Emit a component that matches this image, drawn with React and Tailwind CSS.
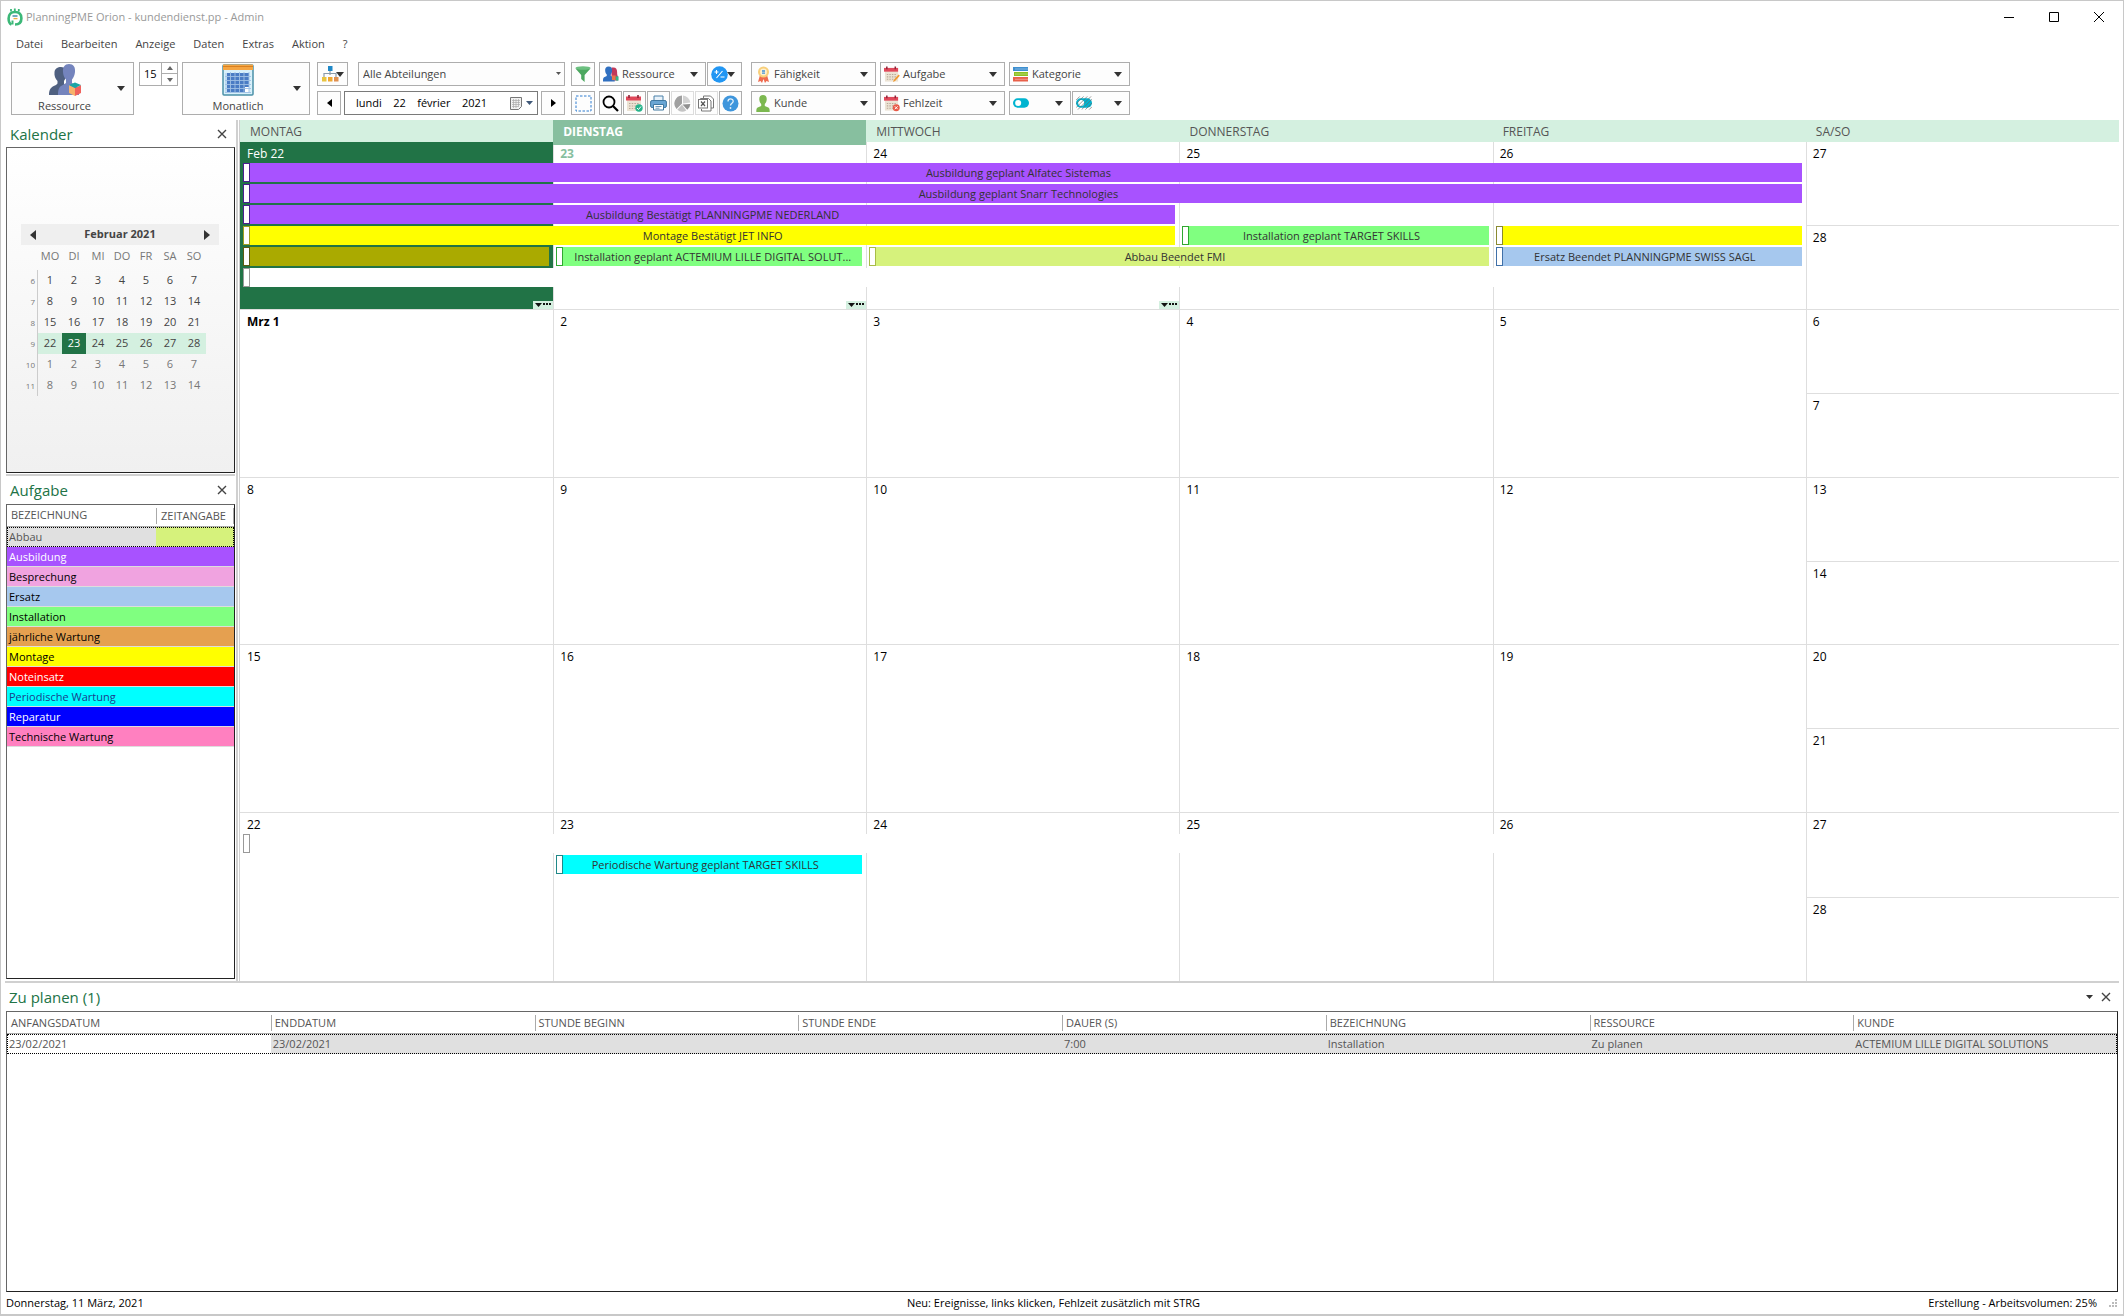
import React, { useState } from "react";

const menuItems = ["Datei", "Bearbeiten", "Anzeige", "Daten", "Extras", "Aktion", "?"];

const weekdays = ["MONTAG", "DIENSTAG", "MITTWOCH", "DONNERSTAG", "FREITAG", "SA/SO"];

const weeks = [
  {
    days: ["Feb 22", "23", "24", "25", "26"],
    weekend: ["27", "28"],
    selected: 0,
    today: 1,
    more: [0, 1, 2],
    events: [
      { label: "Ausbildung geplant Alfatec Sistemas", place: "row-start-1 col-start-1 col-span-5", color: "bg-[#a852ff]", edge: "border-[#4a2090]" },
      { label: "Ausbildung geplant Snarr Technologies", place: "row-start-2 col-start-1 col-span-5", color: "bg-[#a852ff]", edge: "border-[#4a2090]" },
      { label: "Ausbildung Bestätigt PLANNINGPME NEDERLAND", place: "row-start-3 col-start-1 col-span-3", color: "bg-[#a852ff]", edge: "border-[#4a2090]", confirmed: true },
      { label: "Montage Bestätigt JET INFO", place: "row-start-4 col-start-1 col-span-3", color: "bg-[#ffff00]", edge: "border-[#a0a020]", confirmed: true },
      { label: "Installation geplant TARGET SKILLS", place: "row-start-4 col-start-4", color: "bg-[#80ff80]", edge: "border-[#30a830]" },
      { label: "", place: "row-start-4 col-start-5", color: "bg-[#ffff00]", edge: "border-[#8a8a30]" },
      { label: "", place: "row-start-5 col-start-1", color: "bg-[#aaaa00]", edge: "border-[#5c5c10]" },
      { label: "Installation geplant ACTEMIUM LILLE DIGITAL SOLUT...", place: "row-start-5 col-start-2", color: "bg-[#80ff80]", edge: "border-[#30a830]", confirmed: true },
      { label: "Abbau Beendet FMI", place: "row-start-5 col-start-3 col-span-2", color: "bg-[#d6f27c]", edge: "border-[#a8bc48]" },
      { label: "Ersatz Beendet PLANNINGPME SWISS SAGL", place: "row-start-5 col-start-5", color: "bg-[#a6c8ee]", edge: "border-[#4070a8]" },
      { label: "", place: "row-start-6 col-start-1 col-span-5", color: "bg-white", edge: "border-[#999999]", wide: true },
    ],
  },
  { days: ["Mrz 1", "2", "3", "4", "5"], weekend: ["6", "7"], events: [] },
  { days: ["8", "9", "10", "11", "12"], weekend: ["13", "14"], events: [] },
  { days: ["15", "16", "17", "18", "19"], weekend: ["20", "21"], events: [] },
  {
    days: ["22", "23", "24", "25", "26"],
    weekend: ["27", "28"],
    events: [
      { label: "", place: "row-start-1 col-start-1 col-span-5", color: "bg-white", edge: "border-[#999999]", wide: true },
      { label: "Periodische Wartung geplant TARGET SKILLS", place: "row-start-2 col-start-2", color: "bg-[#00ffff]", edge: "border-[#208888]" },
    ],
  },
];

const miniWeeks = [
  { no: 6, days: [1, 2, 3, 4, 5, 6, 7] },
  { no: 7, days: [8, 9, 10, 11, 12, 13, 14] },
  { no: 8, days: [15, 16, 17, 18, 19, 20, 21] },
  { no: 9, days: [22, 23, 24, 25, 26, 27, 28], current: true },
  { no: 10, days: [1, 2, 3, 4, 5, 6, 7], other: true },
  { no: 11, days: [8, 9, 10, 11, 12, 13, 14], other: true },
];

const tasks = [
  { name: "Ausbildung", style: "bg-[#a852ff] text-white" },
  { name: "Besprechung", style: "bg-[#f0a3e0] text-black" },
  { name: "Ersatz", style: "bg-[#a6c8ee] text-black" },
  { name: "Installation", style: "bg-[#80ff80] text-black" },
  { name: "jährliche Wartung", style: "bg-[#e5a050] text-black" },
  { name: "Montage", style: "bg-[#ffff00] text-black" },
  { name: "Noteinsatz", style: "bg-[#ff0000] text-white" },
  { name: "Periodische Wartung", style: "bg-[#00ffff] text-[#1c3c8c]" },
  { name: "Reparatur", style: "bg-[#0000ff] text-white" },
  { name: "Technische Wartung", style: "bg-[#ff80c0] text-black" },
];

const planColumns = ["ANFANGSDATUM", "ENDDATUM", "STUNDE BEGINN", "STUNDE ENDE", "DAUER (S)", "BEZEICHNUNG", "RESSOURCE", "KUNDE"];
const planRow = ["23/02/2021", "23/02/2021", "", "", "7:00", "Installation", "Zu planen", "ACTEMIUM LILLE DIGITAL SOLUTIONS"];

function Caret({ className = "" }) {
  return (
    <svg width="8" height="5" viewBox="0 0 8 5" className={`shrink-0 ${className}`}>
      <path d="M0 0h8L4 5z" fill="#333" />
    </svg>
  );
}

function CloseIcon() {
  return (
    <svg width="10" height="10" viewBox="0 0 10 10">
      <path d="M1 1l8 8M9 1L1 9" stroke="#444" strokeWidth="1.4" />
    </svg>
  );
}

function Logo() {
  return (
    <svg width="16" height="18" viewBox="0 0 16 18">
      <path d="M4 3.5V1M7.8 3V.5M11.8 3.5V1" stroke="#3cb878" strokeWidth="1.8" />
      <path d="M4.5 16.500C2.200 15.500 1.600 13 1.600 10.500 1.600 6 4 4 8 4s6.400 2 6.400 6.200-2.400 6.300-6.400 6.300" fill="none" stroke="#3cb878" strokeWidth="2.600" />
      <path d="M5.500 8h5" stroke="#2b7a9b" strokeWidth="1.3" />
      <path d="M6.500 10.6h4" stroke="#f0b040" strokeWidth="1.3" />
      <path d="M5.500 12.500v4" stroke="#3cb878" strokeWidth="2" />
    </svg>
  );
}

function PeopleIcon() {
  return (
    <svg width="32" height="32" viewBox="0 0 32 32">
      <path d="M12 3c4 0 6 3 5.500 7.500-.3 3-1.500 5-2.500 6.500v3l6 4v7H0c0-6 2-8 7-10l1.500-1.500V17C6.500 15 5 12 5.500 8 6 4.500 8.500 3 12 3z" fill="#4f6080" />
      <path d="M20 0c4.500 0 6.500 3 6 8-.3 3-1.500 5.500-3 7.500V19l4 2.500c2.500 1.500 3 4.500 3 9.500H9c0-5.500 1-8 4-9.500l4-2.500v-3.500c-1.800-2-2.800-4.500-3-7.500-.4-5 1.800-8 6-8z" fill="#7484bd" />
      <path d="M20 21l6 3v8l-6-3z" fill="#f6b26b" />
      <path d="M32 21l-6 3v8l6-3z" fill="#f0625d" />
      <path d="M20 21l6-2.500 6 2.500-6 3z" fill="#18a5a5" />
    </svg>
  );
}

function MonthIcon() {
  return (
    <svg width="32" height="32" viewBox="0 0 32 32">
      <rect x="1" y="1" width="30" height="30" rx="1" fill="#d8f0fa" stroke="#4a90a8" strokeWidth="1.500" />
      <path d="M1 .5h30V6H1z" fill="#f5a542" />
      <path d="M1 2.500h30" stroke="#d98020" />
      <path d="M5 9h22v14h-4v5H5z" fill="#4a7cc4" />
      <path d="M23 23h4v5h-4z" fill="#fff" />
      <path d="M4 9v20M8.500 8v21M13 8v21M17.500 8v21M22 8v21M27 8v21M3 12.500h26M3 16.500h26M3 20.500h26M3 24.500h26M3 28.500h26" stroke="#9fc0e4" strokeWidth=".9" />
    </svg>
  );
}

function TreeIcon() {
  return (
    <svg width="18" height="16" viewBox="0 0 18 16">
      <path d="M8 4v5M2 11V7.500h12V11" fill="none" stroke="#8a9aa8" strokeWidth="1.200" />
      <rect x="6" y="0" width="4.500" height="5" fill="#1e88c8" />
      <rect x="0" y="11" width="4.500" height="4.500" fill="#e8c440" />
      <rect x="6" y="11" width="4.500" height="4.500" fill="#f0a830" />
      <rect x="12" y="11" width="4.500" height="4.500" fill="#e09050" />
    </svg>
  );
}

function FunnelIcon() {
  return (
    <svg width="16" height="16" viewBox="0 0 16 16">
      <path d="M.5 2.500l5.700 6.500v4l3.400 3V9l5.900-6.500z" fill="#4ca860" />
      <ellipse cx="8" cy="2" rx="7.500" ry="1.800" fill="#6cc080" />
    </svg>
  );
}

function ResourceIcon() {
  return (
    <svg width="17" height="16" viewBox="0 0 17 16">
      <path d="M11 1c3 0 4 2 4 5 0 2 0 3 1 5v4H9V1z" fill="#c0395a" />
      <path d="M6 0c2.800 0 4 1.800 3.700 4.600C9.500 6.500 9 7.500 8.300 8.500V10l3 1.500c.9.500 1.200 1.500 1.200 4.500H0c0-3 .3-4 1.200-4.500L4 10V8.500C3 7.500 2.500 6.500 2.300 4.600 2 1.800 3.200 0 6 0z" fill="#2f6fc0" />
      <path d="M9.500 9.500h4v5h-4z" fill="#e8734a" />
      <path d="M13.500 10.500h3V15h-3z" fill="#2fb88a" />
    </svg>
  );
}

function PlusMinusIcon() {
  return (
    <svg width="17" height="17" viewBox="0 0 17 17">
      <circle cx="8.500" cy="8.500" r="8.300" fill="#2196f3" />
      <path d="M3.500 6h4M5.500 4v4M11.500 5l-6 7M9.500 11h4" stroke="#fff" strokeWidth="1.100" />
    </svg>
  );
}

function MedalIcon() {
  return (
    <svg width="13" height="17" viewBox="0 0 13 17">
      <path d="M3 9l-2 7 2.500-1L5 17l1.500-4L8 17l1.500-2 2.500 1-2-7z" fill="#ef6b4f" />
      <circle cx="6.500" cy="6" r="5.500" fill="#f8cf7a" />
      <circle cx="6.500" cy="6" r="3.400" fill="#fdf0d0" />
      <path d="M5 5h3M5 7.200h3" stroke="#4090d8" strokeWidth="1.300" />
    </svg>
  );
}

function CalendarIcon({ kind }) {
  return (
    <svg width="17" height="17" viewBox="0 0 17 17">
      <path d="M1 5h14v11H1z" fill="#ece3d4" />
      <path d="M0 1.500h15V5.500H0z" fill="#e0485a" />
      <path d="M3 0v3M12 0v3" stroke="#8c2438" strokeWidth="1.600" />
      <path d="M3 8.500h10M3 11h10M3 13.500h7" stroke="#b8a898" strokeWidth="1.200" strokeDasharray="1.500 1.200" />
      {kind === "edit" && <path d="M15.500 8.500L10.500 14l-1 2.500 2.300-1.200 5-5.500z" fill="#f09a30" />}
      {kind === "remove" && <circle cx="13" cy="13" r="3.700" fill="#e85a48" />}
      {kind === "remove" && <path d="M11.500 11.500l3 3M14.500 11.500l-3 3" stroke="#fff" />}
      {kind === "check" && <circle cx="13" cy="13" r="3.700" fill="#26b48c" />}
      {kind === "check" && <path d="M11 13l1.500 1.500 2.500-3" fill="none" stroke="#fff" />}
    </svg>
  );
}

function BooksIcon() {
  return (
    <svg width="16" height="16" viewBox="0 0 16 16">
      <path d="M0 1h15v4H0z" fill="#3d8fd0" />
      <path d="M1 6h14v4H1z" fill="#8cc021" />
      <path d="M0 11h15v4.500H0z" fill="#e8604a" />
      <path d="M2 3h13M2 8h13M2 13.300h13" stroke="#fff" strokeWidth=".6" opacity=".6" />
    </svg>
  );
}

function ClientIcon() {
  return (
    <svg width="14" height="17" viewBox="0 0 14 17">
      <path d="M7 0c2.600 0 4 1.800 3.700 4.700C10.500 7 9.500 8.200 8.800 9v2l3.500 1.500c1 .5 1.400 1.500 1.400 4.500H.3c0-3 .4-4 1.400-4.500L5.200 11V9C4.500 8.200 3.500 7 3.300 4.700 3 1.800 4.400 0 7 0z" fill="#7cb850" />
    </svg>
  );
}

function ToggleIcon({ hatched }) {
  return (
    <svg width="17" height="14" viewBox="0 0 17 14">
      <rect x="0" y="2" width="17" height="10" rx="5" fill="#00b4d0" />
      <circle cx="5.500" cy="7" r="3.200" fill="#fff" />
      {hatched && <path d="M0 4l4-4M0 8l8-8M0 12L12 0M2 14L16 0M6 14L17 3M10 14l7-7M14 14l3-3" stroke="#666" strokeWidth=".7" />}
    </svg>
  );
}

function SelectionIcon() {
  return (
    <svg width="17" height="17" viewBox="0 0 17 17">
      <rect x="1" y="1" width="15" height="15" fill="none" stroke="#2f7dd0" strokeDasharray="2.500 1.500" />
    </svg>
  );
}

function SearchIcon() {
  return (
    <svg width="17" height="17" viewBox="0 0 17 17">
      <circle cx="7" cy="7" r="5.500" fill="none" stroke="#000" strokeWidth="1.800" />
      <path d="M11 11l5 5" stroke="#000" strokeWidth="2.200" />
    </svg>
  );
}

function PrinterIcon() {
  return (
    <svg width="17" height="16" viewBox="0 0 17 16">
      <path d="M4 1h9v5H4z" fill="#e8f2fa" stroke="#4a80a8" />
      <rect x=".6" y="5.500" width="15.800" height="7" rx="1.500" fill="#6aa6d4" stroke="#3f78a0" />
      <path d="M3.500 9.500h10V15h-10z" fill="#fff" stroke="#3f78a0" />
      <path d="M5.500 11.500h6M5.500 13.200h4" stroke="#4a80a8" strokeWidth=".8" />
    </svg>
  );
}

function PieIcon() {
  return (
    <svg width="17" height="17" viewBox="0 0 17 17">
      <path d="M8 8.500V.6A8 8 0 0 0 2.500 14z" fill="#a0a0a0" />
      <path d="M9 7.500V.6a8 8 0 0 1 7.300 7L9 8.500z" fill="#d2d2d2" />
      <path d="M8.500 9.500l7.800-.5a8 8 0 0 1-3 5.800z" fill="#909090" />
      <path d="M8 9.800l4.300 5.600A8 8 0 0 1 3.300 14.800z" fill="#c4c4c4" />
    </svg>
  );
}

function ExcelIcon() {
  return (
    <svg width="17" height="17" viewBox="0 0 17 17">
      <path d="M5.500 3V1h7l3 3v9h-3" fill="#fff" stroke="#777" />
      <path d="M2.500 4V3.500h8L13 6v10H3.500v-2" fill="#fff" stroke="#777" />
      <rect x=".5" y="4.500" width="9" height="8.500" fill="#fff" stroke="#777" />
      <path d="M3 6.500l4 4.500M7 6.500L3 11" stroke="#555" strokeWidth="1.200" />
    </svg>
  );
}

function HelpIcon() {
  return (
    <svg width="17" height="17" viewBox="0 0 17 17">
      <circle cx="8.500" cy="8.500" r="8" fill="#3f96dc" />
      <path d="M6 6.500c0-3.500 5.200-3.300 5.200-.3 0 2-2.700 2-2.700 4.300" fill="none" stroke="#e4f2fc" strokeWidth="1.300" />
      <circle cx="8.500" cy="13" r=".9" fill="#e4f2fc" />
    </svg>
  );
}

function ComboButton({ icon, label, width }) {
  return (
    <button className={`flex h-6 items-center border border-[#adadad] bg-[#fdfdfd] px-[3px] text-left ${width}`} aria-label={label || "Umschalten"}>
      <span className="mr-[3px] flex w-4 shrink-0 justify-center">{icon}</span>
      <span className="grow">{label}</span>
      <Caret className="mr-1" />
    </button>
  );
}

function IconButton({ icon, label, width = "w-[23px]", faded }) {
  return (
    <button
      aria-label={label}
      className={`flex h-6 items-center justify-center border bg-[#fdfdfd] ${width} ${faded ? "border-[#dcdcdc]" : "border-[#adadad]"}`}
    >
      {icon}
    </button>
  );
}

function BigButton({ icon, label, width }) {
  return (
    <button className={`flex h-[53px] border border-[#adadad] bg-[#fdfdfd] ${width}`}>
      <span className="flex h-full grow flex-col items-center justify-between">
        <span className="pt-px">{icon}</span>
        <span className="leading-4">{label}</span>
      </span>
      <Caret className="mr-2 self-center" />
    </button>
  );
}

function Toolbar() {
  const [step, setStep] = useState(15);
  const [date, setDate] = useState("lundi    22    février    2021");

  return (
    <div className="flex pt-[7px] pb-[5px] pl-[10px]">
      <BigButton icon={<PeopleIcon />} label="Ressource" width="w-[123px]" />
      <div className="ml-[5px] flex h-6 w-[39px] border border-[#adadad]">
        <input
          aria-label="Schrittweite"
          className="w-[21px] bg-white pl-1 text-black outline-none"
          value={step}
          onChange={(e) => setStep(Number(e.target.value) || 0)}
        />
        <div className="flex grow flex-col border-l border-[#adadad]">
          <button aria-label="Mehr" className="flex h-[11px] items-center justify-center border-b border-[#adadad]" onClick={() => setStep(step + 1)}>
            <svg width="6" height="4" viewBox="0 0 6 4"><path d="M0 4h6L3 0z" fill="#666" /></svg>
          </button>
          <button aria-label="Weniger" className="flex h-[11px] items-center justify-center" onClick={() => setStep(step - 1)}>
            <svg width="6" height="4" viewBox="0 0 6 4"><path d="M0 0h6L3 4z" fill="#666" /></svg>
          </button>
        </div>
      </div>
      <div className="ml-1">
        <BigButton icon={<MonthIcon />} label="Monatlich" width="w-32" />
      </div>

      <div className="ml-[7px] flex w-[248px] flex-col gap-[5px]">
        <div className="flex gap-[10px]">
          <button aria-label="Struktur" className="flex h-6 w-[31px] items-center justify-center border border-[#adadad] bg-[#fdfdfd]">
            <TreeIcon />
            <Caret className="-ml-1" />
          </button>
          <div className="relative grow">
            <select aria-label="Abteilung" className="h-6 w-full appearance-none border border-[#adadad] bg-[#fdfdfd] px-1">
              <option>Alle Abteilungen</option>
            </select>
            <svg width="5" height="3" viewBox="0 0 5 3" className="pointer-events-none absolute top-[10px] right-[4px]">
              <path d="M0 0h5L2.500 3z" fill="#555" />
            </svg>
          </div>
        </div>
        <div className="flex gap-[3px]">
          <IconButton
            label="Zurück"
            width="w-6"
            icon={<svg width="5" height="8" viewBox="0 0 5 8"><path d="M5 0v8L0 4z" fill="#000" /></svg>}
          />
          <div className="flex h-6 grow items-center border border-[#7a7a7a] bg-white pr-1">
            <input
              aria-label="Datum"
              className="w-0 grow bg-transparent pl-[11px] text-black outline-none"
              value={date}
              onChange={(e) => setDate(e.target.value)}
            />
            <button aria-label="Kalender öffnen" className="flex items-center gap-1">
              <svg width="12" height="13" viewBox="0 0 12 13">
                <path d="M.5.5h11v9l-3 3h-8z" fill="#f2f2f2" stroke="#777" />
                <path d="M2 3.500h8M2 5.500h8M2 7.500h8M2 9.500h6M3.500 2v9M6 2v9M8.500 2v8" stroke="#aaa" strokeWidth=".7" />
              </svg>
              <svg width="7" height="4" viewBox="0 0 7 4"><path d="M0 0h7L3.500 4z" fill="#3f5878" /></svg>
            </button>
          </div>
          <IconButton
            label="Weiter"
            width="w-6"
            icon={<svg width="5" height="8" viewBox="0 0 5 8"><path d="M0 0v8l5-4z" fill="#000" /></svg>}
          />
        </div>
      </div>

      <div className="ml-[6px] flex flex-col gap-[5px]">
        <div className="flex gap-1">
          <IconButton label="Filter" width="w-6" icon={<FunnelIcon />} />
          <div className="flex gap-px">
            <ComboButton icon={<ResourceIcon />} label="Ressource" width="w-[107px]" />
            <button aria-label="Plus Minus" className="flex h-6 w-[35px] items-center border border-[#adadad] bg-[#fdfdfd] pl-[3px]">
              <PlusMinusIcon />
              <Caret className="-ml-px" />
            </button>
          </div>
        </div>
        <div className="flex gap-1">
          <IconButton label="Auswahl" width="w-6" icon={<SelectionIcon />} />
          <div className="flex gap-px">
            <IconButton label="Suchen" icon={<SearchIcon />} />
            <IconButton label="Termin prüfen" icon={<CalendarIcon kind="check" />} />
            <IconButton label="Drucken" icon={<PrinterIcon />} />
            <IconButton label="Statistik" icon={<PieIcon />} faded />
            <IconButton label="Export" icon={<ExcelIcon />} faded />
            <IconButton label="Hilfe" icon={<HelpIcon />} />
          </div>
        </div>
      </div>

      <div className="ml-[9px] flex flex-col gap-[5px]">
        <div className="flex gap-1">
          <ComboButton icon={<MedalIcon />} label="Fähigkeit" width="w-[125px]" />
          <ComboButton icon={<CalendarIcon kind="edit" />} label="Aufgabe" width="w-[125px]" />
          <ComboButton icon={<BooksIcon />} label="Kategorie" width="w-[121px]" />
        </div>
        <div className="flex gap-1">
          <ComboButton icon={<ClientIcon />} label="Kunde" width="w-[125px]" />
          <ComboButton icon={<CalendarIcon kind="remove" />} label="Fehlzeit" width="w-[125px]" />
          <div className="flex gap-px">
            <ComboButton icon={<ToggleIcon />} label="" width="w-[62px]" />
            <ComboButton icon={<ToggleIcon hatched />} label="" width="w-[58px]" />
          </div>
        </div>
      </div>
    </div>
  );
}

function PanelTitle({ title, height, children }) {
  return (
    <div className={`flex items-center justify-between pr-2 pl-1 ${height}`}>
      <h2 className="text-[15px] leading-5 text-[#217346]">{title}</h2>
      <div className="flex items-center gap-2">
        {children}
        <button aria-label={`${title} schließen`}>
          <CloseIcon />
        </button>
      </div>
    </div>
  );
}

function MiniCalendar() {
  return (
    <div className="flex h-[326px] items-center border border-[#222] border-t-[#666] border-l-[#666] bg-linear-to-b from-white to-[#f0f0f0]">
      <div className="ml-[14px] w-[198px]">
        <div className="flex h-[21px] items-center justify-between bg-[#efefef] px-[9px]">
          <button aria-label="Voriger Monat">
            <svg width="6" height="10" viewBox="0 0 6 10"><path d="M6 0v10L0 5z" fill="#333" /></svg>
          </button>
          <span className="font-bold">Februar 2021</span>
          <button aria-label="Nächster Monat">
            <svg width="6" height="10" viewBox="0 0 6 10"><path d="M0 0v10l6-5z" fill="#333" /></svg>
          </button>
        </div>
        <table className="w-[185px] table-fixed border-separate border-spacing-0 text-center">
          <thead>
            <tr className="h-[25px] text-[#777]">
              <th className="w-[17px] p-0" aria-label="Woche"></th>
              {["MO", "DI", "MI", "DO", "FR", "SA", "SO"].map((day) => (
                <th key={day} className="p-0 pb-[2px] font-normal">{day}</th>
              ))}
            </tr>
          </thead>
          <tbody>
            {miniWeeks.map((week) => (
              <tr key={week.no} className={`h-[21px] ${week.other ? "text-[#777]" : "text-[#444]"}`}>
                <td className="border-r border-[#ccc] p-0 pr-[2px] text-right text-[8px] text-[#777]">{week.no}</td>
                {week.days.map((day) => (
                  <td
                    key={day}
                    className={`p-0 ${week.current ? (day === 23 ? "bg-[#217346] text-white" : "bg-[#d4f0e0]") : ""}`}
                  >
                    {day}
                  </td>
                ))}
              </tr>
            ))}
          </tbody>
        </table>
      </div>
    </div>
  );
}

function TaskList() {
  return (
    <div className="mb-[2px] grow border border-[#222] border-t-[#666] border-l-[#666]">
      <table className="w-full table-fixed border-separate border-spacing-0 text-left">
        <thead>
          <tr className="h-[22px] text-[#555]">
            <th className="w-[149px] border-b border-[#aaa] p-0 pl-1 font-normal">BEZEICHNUNG</th>
            <th className="border-b border-[#aaa] p-0 font-normal">
              <span className="block border-x border-[#aaa] pl-1 leading-4">ZEITANGABE</span>
            </th>
          </tr>
        </thead>
        <tbody>
          <tr className="h-5 leading-4 outline-1 -outline-offset-1 outline-dotted outline-black">
            <td className="bg-[#e0e0e0] p-0 pl-[2px] text-[#555]">Abbau</td>
            <td className="bg-[#d6f27c] p-0"></td>
          </tr>
          {tasks.map((task) => (
            <tr key={task.name} className={`h-5 leading-4 ${task.style}`}>
              <td colSpan={2} className="border-b border-[#dddddd] p-0 pl-[2px]">{task.name}</td>
            </tr>
          ))}
        </tbody>
      </table>
    </div>
  );
}

function CalendarEvent({ event }) {
  return (
    <div className={`z-10 ml-[3px] flex min-w-0 ${event.place} ${event.wide ? "" : "mr-1"} ${event.color}`}>
      <span className={`w-[7px] shrink-0 border bg-white ${event.edge}`}></span>
      <span
        className={`min-w-0 grow overflow-hidden text-center leading-[19px] whitespace-nowrap text-[#333] ${event.confirmed ? "" : "pr-[15px]"}`}
      >
        {event.label}
      </span>
    </div>
  );
}

function Week({ week, last }) {
  const line = last ? "" : "border-b border-[#dedede]";
  return (
    <div className="relative grid flex-1 grid-cols-6 text-[12px] leading-4 text-black">
      {week.days.map((day, index) => (
        <div
          key={index}
          className={`relative pt-1 ${line} ${index > 0 ? "border-l border-l-[#dedede] pl-[6px]" : "pl-[7px]"} ${
            week.selected === index ? "bg-[#217346] text-white" : ""
          } ${week.today === index ? "font-bold text-[#87bf9f]" : ""} ${day === "Mrz 1" ? "font-bold" : ""}`}
        >
          {day}
          {week.more && week.more.includes(index) && (
            <button aria-label="Mehr anzeigen" className="absolute right-0 bottom-0 flex h-2 w-5 items-center justify-center bg-[#d4f0e0]">
              <svg width="16" height="4" viewBox="0 0 16 4">
                <path d="M0 0h7L3.500 4zM8 0h2v2H8zM11 0h2v2h-2zM14 0h2v2h-2z" fill="#111" />
              </svg>
            </button>
          )}
        </div>
      ))}
      <div className={`flex flex-col border-l border-l-[#dedede] ${line}`}>
        <div className="flex-1 border-b border-[#dedede] pt-1 pl-[6px]">{week.weekend[0]}</div>
        <div className="flex-1 pt-1 pl-[6px]">{week.weekend[1]}</div>
      </div>
      {week.events.length > 0 && (
        <div className="absolute inset-x-0 top-[21px] grid auto-rows-[19px] grid-cols-6 gap-y-[2px] text-[11px]">
          {week.events.map((event) => (
            <CalendarEvent key={event.place} event={event} />
          ))}
        </div>
      )}
    </div>
  );
}

function MonthView() {
  return (
    <main className="mr-1 flex grow flex-col">
      <div className="relative z-20 grid h-[22px] grid-cols-6 bg-[#d4f0e0] text-[12px] leading-6 text-[#555]">
        {weekdays.map((day) => (
          <div key={day} className={`pl-[10px] ${day === "DIENSTAG" ? "h-[25px] bg-[#87bf9f] font-bold text-white" : ""}`}>
            {day}
          </div>
        ))}
      </div>
      {weeks.map((week, index) => (
        <Week key={index} week={week} last={index === weeks.length - 1} />
      ))}
    </main>
  );
}

function PlanningPanel() {
  return (
    <section className="mx-1 flex h-[311px] shrink-0 flex-col border-t-2 border-[#d0d0d0]">
      <PanelTitle title="Zu planen (1)" height="h-7">
        <button aria-label="Optionen">
          <svg width="7" height="4" viewBox="0 0 7 4"><path d="M0 0h7L3.500 4z" fill="#333" /></svg>
        </button>
      </PanelTitle>
      <div className="mx-px grow border border-[#222] border-t-[#666] border-l-[#666]">
        <table className="w-full table-fixed border-separate border-spacing-0 text-left text-[#555]">
          <thead>
            <tr className="h-[22px]">
              {planColumns.map((column, index) => (
                <th key={column} className="border-b border-[#aaa] p-0 font-normal">
                  <span className={`block leading-4 ${index > 0 ? "border-l border-[#aaa] pl-[3px]" : "pl-1"}`}>{column}</span>
                </th>
              ))}
            </tr>
          </thead>
          <tbody>
            <tr className="h-5 leading-4 outline-1 -outline-offset-1 outline-dotted outline-black">
              {planRow.map((value, index) => (
                <td key={index} className={`p-0 pl-[2px] ${index > 0 ? "bg-[#e0e0e0]" : ""}`}>{value}</td>
              ))}
            </tr>
          </tbody>
        </table>
      </div>
    </section>
  );
}

function App() {
  return (
    <div className="flex min-h-screen flex-col border border-b-2 border-[#c8c8c8] bg-white font-['Open_Sans','Noto_Sans',sans-serif] text-[11px] text-[#444]">
      <header className="flex h-8 items-center justify-between pr-[19px] pl-[6px]">
        <div className="flex items-center gap-[3px]">
          <Logo />
          <h1 className="text-[#999]">PlanningPME Orion - kundendienst.pp - Admin</h1>
        </div>
        <div className="flex items-center gap-[35px]">
          <button aria-label="Minimieren">
            <svg width="10" height="10" viewBox="0 0 10 10"><path d="M0 5.500h10" stroke="#000" /></svg>
          </button>
          <button aria-label="Maximieren">
            <svg width="10" height="10" viewBox="0 0 10 10"><path d="M.5.500h9v9h-9z" fill="none" stroke="#000" /></svg>
          </button>
          <button aria-label="Schließen">
            <svg width="10" height="10" viewBox="0 0 10 10"><path d="M0 0l10 10M10 0L0 10" stroke="#000" /></svg>
          </button>
        </div>
      </header>
      <nav className="flex h-[22px] items-center gap-[18px] pl-[15px]">
        {menuItems.map((item) => (
          <button key={item}>{item}</button>
        ))}
      </nav>
      <Toolbar />
      <div className="flex grow">
        <aside className="flex w-[235px] shrink-0 flex-col pr-px pl-[5px]">
          <PanelTitle title="Kalender" height="h-[27px]" />
          <MiniCalendar />
          <div className="mt-px h-[2px] bg-[#d0d0d0]"></div>
          <PanelTitle title="Aufgabe" height="h-7" />
          <TaskList />
        </aside>
        <div className="w-1 shrink-0 border-r border-l-2 border-[#d0d0d0]"></div>
        <MonthView />
      </div>
      <PlanningPanel />
      <footer className="flex h-[22px] items-center pr-[6px] pl-[5px] text-black">
        <span className="flex-1">Donnerstag, 11 März, 2021</span>
        <span className="pr-4">Neu: Ereignisse, links klicken, Fehlzeit zusätzlich mit STRG</span>
        <span className="flex flex-1 items-center justify-end gap-3">
          Erstellung - Arbeitsvolumen: 25%
          <svg width="8" height="8" viewBox="0 0 8 8">
            <path d="M6 0h2v2H6zM6 3h2v2H6zM6 6h2v2H6zM3 3h2v2H3zM3 6h2v2H3zM0 6h2v2H0z" fill="#bbb" />
          </svg>
        </span>
      </footer>
    </div>
  );
}

export default App;
